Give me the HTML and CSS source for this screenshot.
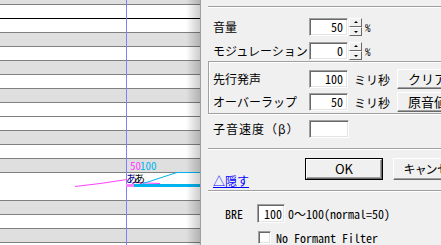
FILE: index.html
```html
<!DOCTYPE html>
<html lang="ja">
<head>
<meta charset="utf-8">
<link rel="stylesheet" href="styles.css">
</head>
<body>
<div class="screen">
  <div class="roll">
    <div class="rows">
      <div class="r g"></div>
      <div class="r w oct"></div>
      <div class="r w"></div>
      <div class="r g"></div>
      <div class="r w"></div>
      <div class="r g"></div>
      <div class="r w"></div>
      <div class="r g"></div>
      <div class="r w"></div>
      <div class="r w"></div>
      <div class="r g"></div>
      <div class="r w"></div>
      <div class="r g"></div>
      <div class="r w noline"></div>
      <div class="r w"></div>
      <div class="r g"></div>
      <div class="r w"></div>
      <div class="r g"></div>
      <div class="r w"></div>
    </div>
    <svg class="overlay" width="200" height="245" viewBox="0 0 200 245">
      <line x1="126.5" y1="0" x2="126.5" y2="245" stroke="#8080ff" stroke-width="1"/>
      <polyline points="75,186.5 100,183.5 127,179.5" fill="none" stroke="#ff40ff" stroke-width="1"/>
      <polyline points="133,182.5 160,183.5" fill="none" stroke="#ff40ff" stroke-width="1"/>
      <rect x="126" y="184" width="8" height="3" fill="#ff80ff"/>
      <rect x="134" y="184" width="66" height="3" fill="#00b4f0"/>
      <polyline points="143,183.5 177,172.5 200,172.5" fill="none" stroke="#00b4f0" stroke-width="1"/>
      <text x="130" y="170" class="num mag">50</text>
      <text x="140" y="170" class="num cy">100</text>
      <text x="126" y="183" class="lyr navy">あ</text>
      <text x="134" y="183" class="lyr">あ</text>
    </svg>
    <div class="shade"></div>
  </div>
  <div class="dlg">
    <div class="sep first"></div>
    <div class="row r1">
      <span class="lbl">音量</span>
      <span class="field w39">50</span>
      <span class="spin"><span class="sb up"></span><span class="sb dn"></span></span>
      <span class="unit">%</span>
    </div>
    <div class="row r2">
      <span class="lbl">モジュレーション</span>
      <span class="field w39">0</span>
      <span class="spin"><span class="sb up"></span><span class="sb dn"></span></span>
      <span class="unit">%</span>
    </div>
    <div class="group">
      <div class="row gr1">
        <span class="lbl gl">先行発声</span>
        <span class="field w39">100</span>
        <span class="ms">ミリ秒</span>
        <span class="btn">クリア</span>
      </div>
      <div class="row gr2">
        <span class="lbl gl">オーバーラップ</span>
        <span class="field w39">50</span>
        <span class="ms">ミリ秒</span>
        <span class="btn">原音値</span>
      </div>
    </div>
    <div class="row r3">
      <span class="lbl beta">子音速度（β）</span>
      <span class="field w40"></span>
    </div>
    <div class="sep mid"></div>
    <div class="row r4">
      <span class="btn ok"><span class="okin">OK</span></span>
      <span class="btn cancel">キャンセル</span>
    </div>
    <div class="row r5">
      <a class="hide">△隠す</a>
    </div>
    <div class="sep low"></div>
    <div class="row r6">
      <span class="bre">BRE</span>
      <span class="field w28">100</span>
      <span class="range">0～100(normal=50)</span>
    </div>
    <div class="row r7">
      <span class="chk"></span>
      <span class="chklbl">No Formant Filter</span>
    </div>
  </div>
</div>
</body>
</html>
```

FILE: styles.css
```css
html, body {
  margin: 0;
  padding: 0;
  width: 441px;
  height: 245px;
  overflow: hidden;
  background: #f0f0f0;
}
.screen {
  display: flex;
  width: 441px;
  height: 245px;
  font-family: "Noto Sans CJK JP", "Noto Sans", sans-serif;
  font-size: 12px;
  color: #000;
}
.roll {
  position: relative;
  width: 200px;
  height: 245px;
  overflow: hidden;
  background: #fff;
  flex: none;
}
.rows {
  margin-top: -9px;
}
.r {
  height: 13px;
  border-bottom: 1px solid #808080;
}
.r.g { background: #dfdfdf; }
.r.w { background: #fff; }
.r.oct { border-bottom-color: #000; }
.r.noline { border-bottom-color: #fff; }
.overlay {
  position: absolute;
  left: 0;
  top: 0;
}
.num {
  font-family: "Noto Sans Mono CJK JP", "DejaVu Sans Mono", monospace;
  font-size: 11px;
}
.mag { fill: #ff40ff; }
.cy { fill: #00b4f0; }
.lyr {
  font-family: "Noto Sans CJK JP", sans-serif;
  font-size: 11px;
  fill: #000;
}
.lyr.navy { fill: #000080; }
.shade {
  position: absolute;
  right: 0;
  top: 0;
  width: 14px;
  height: 245px;
  background: linear-gradient(to right, rgba(0,0,0,0), rgba(0,0,0,0.2));
}
.dlg {
  flex: 1;
  border-left: 1px solid #a0a0a0;
  background: #f0f0f0;
  padding-left: 7px;
  overflow: hidden;
  white-space: nowrap;
}
.sep {
  height: 1px;
  border-top: 1px solid #a0a0a0;
  background: #fff;
}
.sep.first { margin-top: 6px; }
.row {
  display: flex;
  align-items: center;
  height: 18px;
  padding-left: 5px;
}
.lbl {
  width: 96px;
  flex: none;
  line-height: 18px;
}
.lbl.beta { letter-spacing: 1px; }
.r1 { margin-top: 10px; }
.r2 { margin-top: 6px; }
.field {
  box-sizing: border-box;
  height: 18px;
  background: #fff;
  border-top: 1px solid #a0a0a0;
  border-left: 1px solid #a0a0a0;
  border-right: 1px solid #fff;
  border-bottom: 1px solid #fff;
  box-shadow: inset 1px 1px 0 #696969, inset -1px -1px 0 #e3e3e3;
  text-align: right;
  padding-right: 4px;
  font-family: "Noto Sans Mono CJK JP", "DejaVu Sans Mono", monospace;
  font-size: 12px;
  line-height: 16px;
  letter-spacing: 0;
  flex: none;
}
.w39 { width: 39px; }
.w40 { width: 40px; }
.w28 { width: 28px; }
.spin {
  display: flex;
  flex-direction: column;
  width: 13px;
  height: 18px;
  margin-left: 1px;
}
.sb {
  position: relative;
  flex: 1;
  box-sizing: border-box;
  background: #f0f0f0;
  border-top: 1px solid #fff;
  border-left: 1px solid #fff;
  border-right: 1px solid #696969;
  border-bottom: 1px solid #696969;
}
.sb::after {
  content: "";
  position: absolute;
  left: 4px;
  width: 0;
  height: 0;
  border-left: 2px solid transparent;
  border-right: 2px solid transparent;
}
.sb.up::after { top: 2px; border-bottom: 2px solid #000; }
.sb.dn::after { top: 3px; border-top: 2px solid #000; }
.unit {
  margin-left: 3px;
  font-family: "Noto Sans Mono CJK JP", "DejaVu Sans Mono", monospace;
  font-size: 11px;
}
.group {
  box-sizing: border-box;
  margin-top: 1px;
  height: 53px;
  border-top: 1px solid #a0a0a0;
  border-left: 1px solid #a0a0a0;
  border-bottom: 1px solid #a0a0a0;
  box-shadow: inset 1px 1px 0 #fff, 0 1px 0 #fff;
  padding-top: 8px;
}
.group .row { padding-left: 4px; }
.gr2 { margin-top: 5px; }
.ms {
  margin-left: 6px;
  width: 37px;
  flex: none;
}
.btn {
  box-sizing: border-box;
  height: 20px;
  line-height: 18px;
  text-align: center;
  background: #f0f0f0;
  border-top: 1px solid #fff;
  border-left: 1px solid #fff;
  border-right: 1px solid #696969;
  border-bottom: 1px solid #696969;
  box-shadow: inset -1px -1px 0 #a0a0a0;
  flex: none;
}
.group .btn {
  margin-left: 6px;
  width: 76px;
  padding-left: 10px;
  text-align: left;
  font-size: 13px;
}
.r3 { margin-top: 6px; }
.sep.mid { margin-top: 10px; }
.r4 {
  height: 22px;
  margin-top: 8px;
  padding-left: 97px;
}
.btn.ok {
  width: 78px;
  height: 22px;
  border: 1px solid #000;
  box-shadow: none;
  padding: 0;
}
.okin {
  display: block;
  height: 20px;
  box-sizing: border-box;
  border-top: 1px solid #fff;
  border-left: 1px solid #fff;
  border-right: 1px solid #696969;
  border-bottom: 1px solid #696969;
  box-shadow: inset -1px -1px 0 #a0a0a0;
  line-height: 18px;
  font-family: "Noto Sans CJK JP", sans-serif;
  font-weight: 400;
  font-size: 13px;
}
.btn.cancel {
  margin-left: 10px;
  width: 78px;
  height: 22px;
  line-height: 20px;
  padding-left: 10px;
  text-align: left;
  font-feature-settings: "palt";
  letter-spacing: 0.5px;
}
.r5 {
  height: 14px;
  margin-top: -6px;
}
.hide {
  color: #0000ff;
  text-decoration: underline;
  font-size: 12px;
  line-height: 14px;
}
.sep.low { margin-top: 2px; }
.r6 {
  margin-top: 12px;
  height: 19px;
  padding-left: 17px;
}
.bre {
  width: 32px;
  flex: none;
  font-family: "Noto Sans Mono CJK JP", "DejaVu Sans Mono", monospace;
}
.r6 .field { height: 19px; line-height: 17px; padding-right: 2px; }
.range {
  margin-left: 3px;
  font-family: "Noto Sans Mono CJK JP", "DejaVu Sans Mono", monospace;
}
.r7 {
  margin-top: 8px;
  height: 13px;
  padding-left: 50px;
}
.chk {
  box-sizing: border-box;
  width: 13px;
  height: 13px;
  background: #fff;
  border-top: 1px solid #a0a0a0;
  border-left: 1px solid #a0a0a0;
  border-right: 1px solid #fff;
  border-bottom: 1px solid #fff;
  box-shadow: inset 1px 1px 0 #696969, inset -1px -1px 0 #e3e3e3;
  flex: none;
}
.chklbl {
  margin-left: 5px;
  font-family: "Noto Sans Mono CJK JP", "DejaVu Sans Mono", monospace;
}
```
